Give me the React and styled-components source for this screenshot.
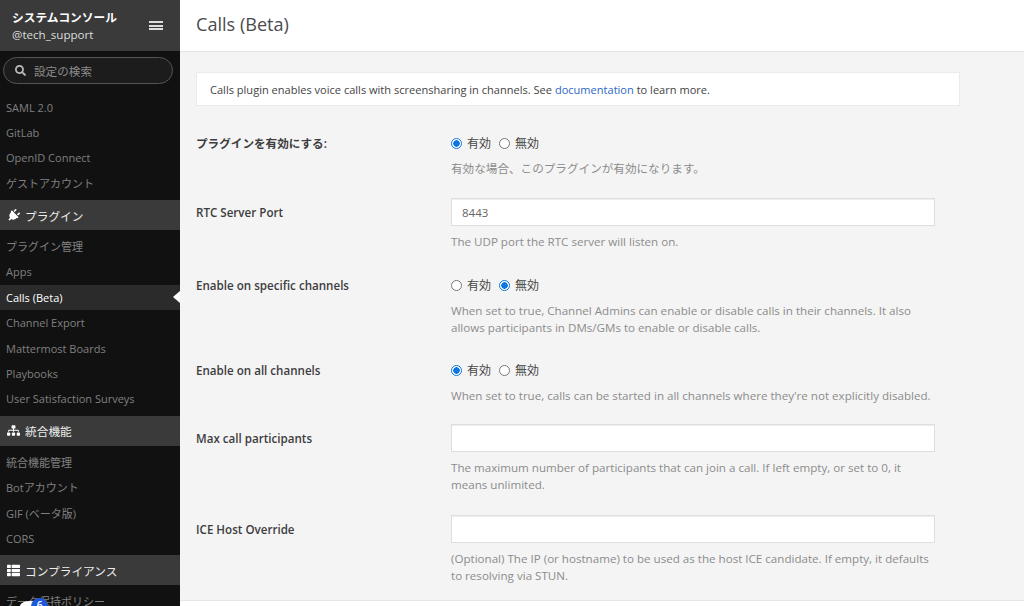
import React from "react"
import styled, { createGlobalStyle } from "styled-components"
import { FaPlug, FaSitemap, FaSearch, FaThList } from "react-icons/fa"

const GlobalStyle = createGlobalStyle`
  html, body {
    margin: 0;
    height: 100%;
    overflow: hidden;
  }
  body {
    font-family: "Open Sans", "Noto Sans CJK JP", sans-serif;
    font-size: 12px;
    color: #3d3c40;
  }
`

const Page = styled.div`
  display: flex;
  width: 1024px;
  height: 606px;
  overflow: hidden;
`

const Sidebar = styled.aside`
  position: relative;
  flex: 0 0 180px;
  height: 606px;
  background: #111;
  overflow: hidden;
`

const SidebarHeader = styled.div`
  height: 51px;
  box-sizing: border-box;
  padding: 0 17px 0 12px;
  display: flex;
  align-items: center;
  justify-content: space-between;
  background: #3a3a3a;
  color: #fff;
`

const HeaderTitle = styled.div`
  font-size: 11.7px;
  font-weight: 700;
  line-height: 17px;
`

const HeaderUser = styled.div`
  font-size: 11.6px;
  line-height: 17px;
  color: #dcdcdc;
`

const Burger = styled.div`
  width: 14px;
  height: 9px;
  border-top: 2px solid #ddd;
  border-bottom: 2px solid #ddd;
  position: relative;
  box-sizing: border-box;
  &::after {
    content: "";
    position: absolute;
    left: 0;
    right: 0;
    top: 1.5px;
    height: 2px;
    background: #ddd;
  }
`

const SearchWrap = styled.div`
  padding: 6px 7px 10.5px 3px;
`

const SearchBox = styled.div`
  height: 25px;
  border: 1px solid #555;
  border-radius: 14px;
  display: flex;
  align-items: center;
  gap: 8px;
  padding-left: 11px;
  color: #8a8a8a;
  font-size: 11.6px;
  background: #1c1c1c;
  svg {
    color: #bbb;
    font-size: 11px;
  }
`

const NavItem = styled.div`
  height: 25.4px;
  line-height: 25px;
  padding-left: 6px;
  font-size: 11px;
  color: ${p => (p.$active ? "#fff" : "#808080")};
  background: ${p => (p.$active ? "#2b2b2b" : "transparent")};
  white-space: nowrap;
  position: relative;
  ${p =>
    p.$active &&
    `&::after {
      content: "";
      position: absolute;
      right: 0;
      top: 6px;
      border: 6px solid transparent;
      border-right: 7px solid #fff;
      border-left: 0;
    }`}
`

const NavGroup = styled.div`
  height: 30px;
  margin: 4px 0;
  display: flex;
  align-items: center;
  gap: 5px;
  padding-left: 7px;
  background: #3a3a3a;
  color: #eee;
  font-size: 11.7px;
  svg {
    color: #fff;
    font-size: 13px;
  }
`

const PlugIcon = styled(FaPlug)`
  transform: rotate(45deg);
`

const Badge = styled.div`
  position: absolute;
  left: 31px;
  top: 598px;
  width: 17px;
  height: 17px;
  border-radius: 50%;
  background: #1c58d9;
  color: #fff;
  font-size: 10px;
  font-weight: 600;
  text-align: center;
  line-height: 15px;
`

const BadgeTail = styled.div`
  position: absolute;
  left: 20px;
  top: 601px;
  width: 20px;
  height: 10px;
  border-radius: 50%;
  background: #fff;
`

const Main = styled.main`
  flex: 1;
  min-width: 0;
  height: 606px;
  display: flex;
  flex-direction: column;
  background: #f4f4f4;
`

const TitleBar = styled.header`
  flex: 0 0 52px;
  box-sizing: border-box;
  display: flex;
  align-items: center;
  padding: 0 16px 3px;
  background: #fff;
  border-bottom: 1px solid #e6e6e6;
  font-size: 18.1px;
  color: #4a4a4d;
`

const Content = styled.div`
  flex: 1;
  min-height: 0;
  padding: 20px 64px 0 16px;
  overflow: hidden;
`

const Banner = styled.div`
  height: 34px;
  box-sizing: border-box;
  padding: 0 13px;
  display: flex;
  align-items: center;
  white-space: pre;
  font-size: 11.05px;
  background: #fff;
  border: 1px solid #ebebeb;
  color: #444;
  margin-bottom: 29px;
`

const DocLink = styled.span`
  color: #2f68c4;
`

const Row = styled.div`
  display: grid;
  grid-template-columns: 255px 484px;
  height: ${p => p.$height}px;
`

const Label = styled.div`
  font-size: 11.6px;
  font-weight: 600;
  line-height: 16px;
  padding-top: ${p => (p.$field ? 6.5 : 0.5)}px;
  color: #3d3c40;
`

const Radios = styled.div`
  display: flex;
  align-items: center;
  gap: 5px;
  height: 16px;
  color: #444;
  font-size: 12px;
`

const Radio = styled.span`
  width: 11px;
  height: 11px;
  box-sizing: border-box;
  border-radius: 50%;
  margin-left: ${p => (p.$spaced ? "3px" : "0")};
  border: 1px solid ${p => (p.$on ? "#0f75e0" : "#777")};
  background: ${p => (p.$on ? "radial-gradient(circle, #0f75e0 0 3px, #fff 3.5px)" : "#fff")};
`

const Input = styled.div`
  height: 28px;
  box-sizing: border-box;
  padding: 0 10px;
  display: flex;
  align-items: center;
  background: #fff;
  border: 1px solid #dedede;
  box-shadow: inset 0 1px 1px rgba(0, 0, 0, 0.075);
  color: #666;
  font-size: 11.5px;
`

const Help = styled.div`
  margin-top: ${p => p.$top}px;
  font-size: 11.6px;
  line-height: 17px;
  color: #8c8c8c;
`

const Footer = styled.div`
  flex: 0 0 6px;
  background: #fff;
  border-top: 1px solid #e6e6e6;
  box-sizing: border-box;
`

const RadioField = ({ on, help }) => (
  <div>
    <Radios>
      <Radio $on={on} />
      <span>有効</span>
      <Radio $on={!on} $spaced />
      <span>無効</span>
    </Radios>
    <Help $top={9}>{help}</Help>
  </div>
)

const InputField = ({ value, help }) => (
  <div>
    <Input>{value}</Input>
    <Help $top={7}>{help}</Help>
  </div>
)

export default function App() {
  return (
    <Page>
      <GlobalStyle />
      <Sidebar>
        <SidebarHeader>
          <div>
            <HeaderTitle>システムコンソール</HeaderTitle>
            <HeaderUser>@tech_support</HeaderUser>
          </div>
          <Burger />
        </SidebarHeader>
        <SearchWrap>
          <SearchBox>
            <FaSearch />
            設定の検索
          </SearchBox>
        </SearchWrap>
        <NavItem>SAML 2.0</NavItem>
        <NavItem>GitLab</NavItem>
        <NavItem>OpenID Connect</NavItem>
        <NavItem>ゲストアカウント</NavItem>
        <NavGroup>
          <PlugIcon />
          プラグイン
        </NavGroup>
        <NavItem>プラグイン管理</NavItem>
        <NavItem>Apps</NavItem>
        <NavItem $active>Calls (Beta)</NavItem>
        <NavItem>Channel Export</NavItem>
        <NavItem>Mattermost Boards</NavItem>
        <NavItem>Playbooks</NavItem>
        <NavItem>User Satisfaction Surveys</NavItem>
        <NavGroup>
          <FaSitemap />
          統合機能
        </NavGroup>
        <NavItem>統合機能管理</NavItem>
        <NavItem>Botアカウント</NavItem>
        <NavItem>GIF (ベータ版)</NavItem>
        <NavItem>CORS</NavItem>
        <NavGroup>
          <FaThList />
          コンプライアンス
        </NavGroup>
        <NavItem>データ保持ポリシー</NavItem>
        <BadgeTail />
        <Badge>6</Badge>
      </Sidebar>
      <Main>
        <TitleBar>Calls (Beta)</TitleBar>
        <Content>
          <Banner>
            Calls plugin enables voice calls with screensharing in channels. See <DocLink>documentation</DocLink> to learn more.
          </Banner>
          <Row $height={63}>
            <Label>プラグインを有効にする:</Label>
            <RadioField on help="有効な場合、このプラグインが有効になります。" />
          </Row>
          <Row $height={79}>
            <Label $field>RTC Server Port</Label>
            <InputField value="8443" help="The UDP port the RTC server will listen on." />
          </Row>
          <Row $height={85}>
            <Label>Enable on specific channels</Label>
            <RadioField
              on={false}
              help="When set to true, Channel Admins can enable or disable calls in their channels. It also allows participants in DMs/GMs to enable or disable calls."
            />
          </Row>
          <Row $height={62}>
            <Label>Enable on all channels</Label>
            <RadioField on help="When set to true, calls can be started in all channels where they're not explicitly disabled." />
          </Row>
          <Row $height={91}>
            <Label $field>Max call participants</Label>
            <InputField help="The maximum number of participants that can join a call. If left empty, or set to 0, it means unlimited." />
          </Row>
          <Row $height={70}>
            <Label $field>ICE Host Override</Label>
            <InputField help="(Optional) The IP (or hostname) to be used as the host ICE candidate. If empty, it defaults to resolving via STUN." />
          </Row>
        </Content>
        <Footer />
      </Main>
    </Page>
  )
}
